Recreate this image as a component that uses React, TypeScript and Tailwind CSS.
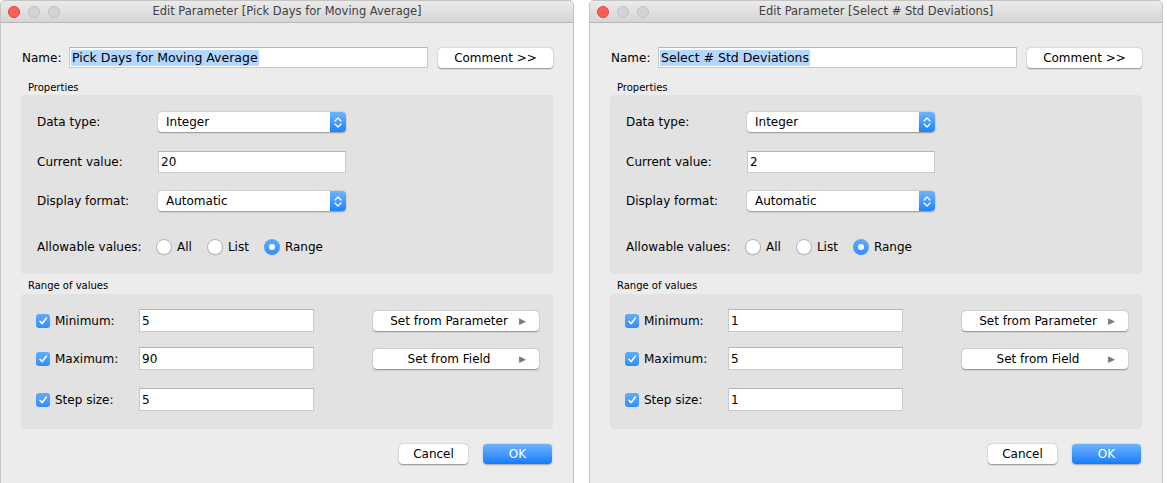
import React from "react";

type DialogProps = {
  name: string;
  current: string;
  min: string;
  max: string;
  step: string;
};

const font = "font-['DejaVu_Sans',Verdana,sans-serif]";

const Stepper = () => (
  <div className="flex h-full w-[16px] items-center justify-center rounded-r-[4px] bg-gradient-to-b from-[#6cb3fa] to-[#1a82fb]">
    <svg width="8" height="13" viewBox="0 0 8 13" fill="none">
      <path d="M1 5 L4 2 L7 5" stroke="white" strokeWidth="1.3" strokeLinecap="round" strokeLinejoin="round" />
      <path d="M1 8 L4 11 L7 8" stroke="white" strokeWidth="1.3" strokeLinecap="round" strokeLinejoin="round" />
    </svg>
  </div>
);

const PopUp = ({ value }: { value: string }) => (
  <div className="flex h-[20px] w-[188px] items-center rounded-[4px] bg-white shadow-[0_0.5px_1.5px_rgba(0,0,0,0.35)]">
    <span className="flex-1 pl-[8px] text-[12px] text-black">{value}</span>
    <Stepper />
  </div>
);

const TextBox = ({ value, w, h }: { value: string; w: string; h: string }) => (
  <div className={`flex items-center border border-[#c9c9c9] border-t-[#b5b5b5] bg-white pl-[2px] text-[12px] text-black ${w} ${h}`}>
    {value}
  </div>
);

const PushButton = ({ children, className = "" }: { children: React.ReactNode; className?: string }) => (
  <div
    className={`flex h-[20px] items-center justify-center rounded-[4px] bg-white text-[12px] text-black shadow-[0_0.5px_1.5px_rgba(0,0,0,0.4)] ${className}`}
  >
    {children}
  </div>
);

const Radio = ({ on, label }: { on?: boolean; label: string }) => (
  <div className="flex items-center gap-[5px]">
    {on ? (
      <div className="flex h-[16px] w-[16px] items-center justify-center rounded-full bg-gradient-to-b from-[#62acfb] to-[#2f8efb]">
        <div className="h-[6px] w-[6px] rounded-full bg-white" />
      </div>
    ) : (
      <div className="h-[16px] w-[16px] rounded-full border border-[#b4b4b4] bg-white shadow-[0_0.5px_0.5px_rgba(0,0,0,0.1)]" />
    )}
    <span className="text-[12px] text-black">{label}</span>
  </div>
);

const Check = () => (
  <div className="flex h-[14px] w-[14px] items-center justify-center rounded-[3px] bg-gradient-to-b from-[#62acfb] to-[#2f8efb]">
    <svg width="10" height="10" viewBox="0 0 10 10" fill="none">
      <path d="M2 5.3 L4.2 7.6 L8.3 2.2" stroke="white" strokeWidth="1.6" strokeLinecap="round" strokeLinejoin="round" />
    </svg>
  </div>
);

const SetButton = ({ label }: { label: string }) => (
  <PushButton className="relative w-[166px]">
    <span className="pr-[14px]">{label}</span>
    <span className="absolute right-[13px] top-[5px] text-[9px] leading-[10px] text-[#7a7a7a]">▶</span>
  </PushButton>
);

const RangeRow = ({ label, value, mt, button }: { label: string; value: string; mt: string; button?: string }) => (
  <div className={`flex h-[23px] items-center ${mt}`}>
    <div className="flex w-[103px] items-center gap-[5px]">
      <Check />
      <span className="text-[12px] text-black">{label}</span>
    </div>
    <TextBox value={value} w="w-[175px]" h="h-[23px]" />
    {button && (
      <div className="ml-[59px]">
        <SetButton label={button} />
      </div>
    )}
  </div>
);

const Dialog = ({ name, current, min, max, step }: DialogProps) => (
  <div className="flex h-[483px] w-[574px] shrink-0 flex-col overflow-hidden rounded-t-[5px] border-x border-t border-[#c4c4c4] bg-[#ececec]">
    {/* title bar */}
    <div className="relative flex h-[22px] shrink-0 items-center justify-center border-b border-[#b8b8b8] bg-gradient-to-b from-[#ebebeb] to-[#d5d5d5]">
      <div className="absolute left-[7px] top-[5px] flex gap-[8px]">
        <div className="h-[12px] w-[12px] rounded-full border border-[#e0443e] bg-[#fd5f57]" />
        <div className="h-[12px] w-[12px] rounded-full border border-[#c2c2c2] bg-[#d3d3d3]" />
        <div className="h-[12px] w-[12px] rounded-full border border-[#c2c2c2] bg-[#d3d3d3]" />
      </div>
      <span className="text-[11.5px] text-[#404040]">Edit Parameter [{name}]</span>
    </div>

    <div className="flex flex-col px-[20px]">
      {/* name row */}
      <div className="mt-[24px] flex h-[21px] items-center">
        <span className="w-[48px] pl-[1px] text-[12px] text-black">Name:</span>
        <div className="flex h-[21px] w-[359px] items-center border border-[#c9c9c9] border-t-[#b5b5b5] bg-white pl-[1px]">
          <span className="bg-[#b3d7ff] px-[1px] text-[12.5px] leading-[16px] text-black">{name}</span>
        </div>
        <PushButton className="ml-[10px] w-[115px]">Comment &gt;&gt;</PushButton>
      </div>

      <div className="mt-[13px] pl-[7px] text-[10px] leading-[13px] text-black">Properties</div>
      <div className="mt-[1px] flex h-[179px] flex-col rounded-[4px] bg-[#e2e2e2] pl-[16px] pt-[17px]">
        <div className="flex h-[20px] items-center">
          <span className="w-[121px] text-[12px] text-black">Data type:</span>
          <PopUp value="Integer" />
        </div>
        <div className="mt-[19px] flex h-[22px] items-center">
          <span className="w-[121px] text-[12px] text-black">Current value:</span>
          <TextBox value={current} w="w-[188px]" h="h-[22px]" />
        </div>
        <div className="mt-[18px] flex h-[20px] items-center">
          <span className="w-[121px] text-[12px] text-black">Display format:</span>
          <PopUp value="Automatic" />
        </div>
        <div className="mt-[26px] flex h-[20px] items-center">
          <span className="w-[119px] text-[12px] text-black">Allowable values:</span>
          <div className="flex items-center gap-[15px]">
            <Radio label="All" />
            <Radio label="List" />
            <Radio on label="Range" />
          </div>
        </div>
      </div>

      <div className="mt-[4px] pl-[7px] text-[10px] leading-[15px] text-black">Range of values</div>
      <div className="mt-[1px] flex h-[135px] flex-col rounded-[4px] bg-[#e2e2e2] pl-[15px] pt-[15px]">
        <RangeRow label="Minimum:" value={min} mt="" button="Set from Parameter" />
        <RangeRow label="Maximum:" value={max} mt="mt-[15px]" button="Set from Field" />
        <RangeRow label="Step size:" value={step} mt="mt-[18px]" />
      </div>

      <div className="mt-[15px] flex justify-end gap-[15px] pr-[1px]">
        <PushButton className="w-[69px]">Cancel</PushButton>
        <div className="flex h-[20px] w-[69px] items-center justify-center rounded-[4px] bg-gradient-to-b from-[#6cb4fb] to-[#0f7cfa] text-[12px] text-white shadow-[0_0.5px_1.5px_rgba(0,0,0,0.3)]">
          OK
        </div>
      </div>
    </div>
  </div>
);

export default function App() {
  return (
    <div className={`flex h-[483px] w-[1167px] gap-[15px] overflow-hidden bg-white ${font}`}>
      <Dialog name="Pick Days for Moving Average" current="20" min="5" max="90" step="5" />
      <Dialog name="Select # Std Deviations" current="2" min="1" max="5" step="1" />
    </div>
  );
}
